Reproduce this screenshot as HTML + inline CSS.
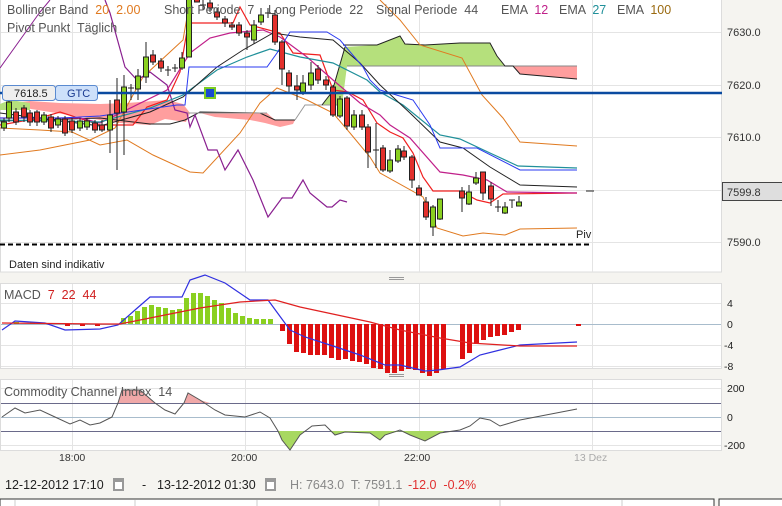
<!DOCTYPE html>
<html><head><meta charset="utf-8"><style>
html,body{margin:0;padding:0;width:782px;height:506px;overflow:hidden;background:#f5f4f0;font-family:"Liberation Sans",sans-serif}
svg{display:block}
svg text{white-space:pre}
</style></head><body>
<svg width="782" height="506" viewBox="0 0 782 506" xmlns="http://www.w3.org/2000/svg" font-family="Liberation Sans, sans-serif">
<rect x="0.5" y="-1" width="721" height="273" fill="#fff" stroke="#dcdcdc"/>
<rect x="0.5" y="283.5" width="721" height="85" fill="#fff" stroke="#dcdcdc"/>
<rect x="0.5" y="379.5" width="721" height="71" fill="#fff" stroke="#dcdcdc"/>
<g stroke="#e4e4e4" stroke-width="1">
<line x1="1" y1="32.5" x2="721" y2="32.5"/><line x1="1" y1="85.5" x2="721" y2="85.5"/><line x1="1" y1="137.5" x2="721" y2="137.5"/><line x1="1" y1="190.5" x2="721" y2="190.5"/><line x1="1" y1="242.5" x2="721" y2="242.5"/>
<line x1="72.5" y1="0" x2="72.5" y2="272"/><line x1="245.5" y1="0" x2="245.5" y2="272"/><line x1="419.5" y1="0" x2="419.5" y2="272"/><line x1="592.5" y1="0" x2="592.5" y2="272"/>
<line x1="72.5" y1="284" x2="72.5" y2="368"/><line x1="245.5" y1="284" x2="245.5" y2="368"/><line x1="419.5" y1="284" x2="419.5" y2="368"/><line x1="592.5" y1="284" x2="592.5" y2="368"/>
<line x1="72.5" y1="380" x2="72.5" y2="450"/><line x1="245.5" y1="380" x2="245.5" y2="450"/><line x1="419.5" y1="380" x2="419.5" y2="450"/><line x1="592.5" y1="380" x2="592.5" y2="450"/>
<line x1="1" y1="303.5" x2="721" y2="303.5"/><line x1="1" y1="345.5" x2="721" y2="345.5"/><line x1="1" y1="366.5" x2="721" y2="366.5"/><line x1="1" y1="388.5" x2="721" y2="388.5"/><line x1="1" y1="445.5" x2="721" y2="445.5"/>
</g>
<line x1="1" y1="324.5" x2="721" y2="324.5" stroke="#a8bccc"/>
<line x1="1" y1="417.5" x2="721" y2="417.5" stroke="#a8bccc"/>
<line x1="1" y1="403.5" x2="721" y2="403.5" stroke="#6a6a8a"/>
<line x1="1" y1="431.5" x2="721" y2="431.5" stroke="#6a6a8a"/>
<g stroke="#999"><line x1="389" y1="277.5" x2="404" y2="277.5"/><line x1="389" y1="279.5" x2="404" y2="279.5"/><line x1="389" y1="374.5" x2="404" y2="374.5"/><line x1="389" y1="376.5" x2="404" y2="376.5"/></g>

<polygon points="0,104 30,101 60,103 100,104 127,103 167,100 183,104 190,113 186,122 165,119 150,125 120,123 100,120" fill="#ff9e9e"/>
<polygon points="187,113 267,113 275,120 295,120 293,124 280,127 265,123 250,120 215,117 200,113" fill="#ff9e9e"/>
<polygon points="0,104 10,100 30,103 30,110 0,110" fill="#b5e07c"/>
<polygon points="322,105 332,92 345,47 377,45 400,36 405,44 425,45 460,43 490,43 497,56 505,66 347,66 342,105" fill="#b5e07c"/>
<polygon points="513,66 577,66 577,79 520,74" fill="#ff9e9e"/>
<polyline points="0,121 40,120 100,118 150,124 170,124 185,120 200,112 260,113 275,120 295,120" fill="none" stroke="#222" stroke-width="1"/>
<polyline points="187,113 267,113" fill="none" stroke="#999"/>
<polyline points="295,120 305,105 342,105" fill="none" stroke="#999"/>
<polyline points="347,66 513,66 577,66" fill="none" stroke="#888"/>
<polyline points="343,45 377,45 400,36 405,44 425,45 460,43 490,43 497,56 505,66 513,66 520,74 577,79" fill="none" stroke="#222"/>
<polyline points="322,105 332,92 345,47" fill="none" stroke="#222"/>

<polyline points="0,155 40,150 90,140 115,128 133,95 143,77 183,40 190,0" fill="none" stroke="#e07a20"/>
<polyline points="380,0 400,20 420,45 462,58 482,95 503,118 520,142 577,146" fill="none" stroke="#e07a20"/>
<polyline points="0,128 40,130 72,132 100,145 127,140 153,155 190,172 203,173 240,133 260,103 277,88 287,92 307,100 333,113 350,133 370,157 380,173 423,197 437,228 463,236 483,233 505,235 520,229 577,228" fill="none" stroke="#e07a20"/>
<polyline points="0,68 20,40 40,12 50,0" fill="none" stroke="#8a2090"/>
<polyline points="105,0 110,13 125,67 137,80 150,72 167,85 175,110 187,113 190,127 195,115 208,150 217,150 225,170 238,150 253,180 268,217 282,198 292,198 303,180 310,193 327,207 332,207 340,200 347,202" fill="none" stroke="#8a2090" stroke-width="1.2"/>
<polyline points="0,125 40,118 60,112 100,125 133,125 147,107 167,100 180,72 188,25 192,23 233,23 240,7 250,25 280,33 293,53 320,55 333,90 348,92 363,100 377,123 390,132 403,138 413,153 423,177 433,191 460,191 477,200 490,203 503,194 577,193" fill="none" stroke="#f02020" stroke-width="1.2"/>
<polyline points="0,118 80,118 100,123 167,90 190,53 210,38 230,33 263,30 280,37 307,57 333,80 360,103 380,115 390,125 410,138 440,172 463,175 487,180 507,192 577,193" fill="none" stroke="#c0208a" stroke-width="1.2"/>
<polyline points="0,120 100,122 150,108 183,95 217,70 247,57 270,49 300,57 333,63 367,80 380,92 403,105 440,135 460,139 490,153 518,166 577,168" fill="none" stroke="#20909a" stroke-width="1.2"/>
<polyline points="0,113 100,126 150,112 183,97 217,67 243,50 273,33 300,37 333,40 360,63 380,85 410,113 440,142 463,148 490,167 520,185 577,187" fill="none" stroke="#222" stroke-width="1"/>
<polyline points="0,118 60,118 100,116 177,105 185,105 189,67 267,67 277,53 290,32 327,32 340,40 363,67 370,80 380,90 413,100 430,125 440,148 477,148 520,170 577,170" fill="none" stroke="#2a3af0" stroke-width="1"/>

<g stroke="#222" stroke-width="1">
<line x1="4" y1="118" x2="4" y2="131"/><rect x="1.5" y="122" width="5" height="6" fill="#8ad020"/>
<line x1="9" y1="100" x2="9" y2="122"/><rect x="6.5" y="102" width="5" height="16" fill="#8ad020"/>
<line x1="16" y1="108" x2="16" y2="125"/><rect x="13.5" y="112" width="5" height="10" fill="#e3302c"/>
<line x1="24" y1="105" x2="24" y2="122"/><rect x="21.5" y="108" width="5" height="9" fill="#e3302c"/>
<line x1="30" y1="110" x2="30" y2="126"/><rect x="27.5" y="113" width="5" height="9" fill="#e3302c"/>
<line x1="37" y1="110" x2="37" y2="126"/><rect x="34.5" y="112" width="5" height="10" fill="#e3302c"/>
<line x1="44" y1="112" x2="44" y2="125"/><rect x="41.5" y="115" width="5" height="7" fill="#8ad020"/>
<line x1="51" y1="114" x2="51" y2="132"/><rect x="48.5" y="117" width="5" height="11" fill="#e3302c"/>
<line x1="58" y1="116" x2="58" y2="128"/><rect x="55.5" y="119" width="5" height="6" fill="#8ad020"/>
<line x1="65" y1="116" x2="65" y2="136"/><rect x="62.5" y="119" width="5" height="14" fill="#e3302c"/>
<line x1="72" y1="118" x2="72" y2="133"/><rect x="69.5" y="121" width="5" height="9" fill="#e3302c"/>
<line x1="80" y1="118" x2="80" y2="131"/><rect x="77.5" y="121" width="5" height="7" fill="#8ad020"/>
<line x1="87" y1="118" x2="87" y2="130"/><rect x="84.5" y="121" width="5" height="6" fill="#8ad020"/>
<line x1="95" y1="120" x2="95" y2="133"/><rect x="92.5" y="123" width="5" height="7" fill="#e3302c"/>
<line x1="102" y1="120" x2="102" y2="132"/><rect x="99.5" y="125" width="5" height="5" fill="#e3302c"/>
<line x1="110" y1="100" x2="110" y2="153"/><rect x="107.5" y="115" width="5" height="15" fill="#8ad020"/>
<line x1="117" y1="78" x2="117" y2="170"/><rect x="114.5" y="100" width="5" height="13" fill="#e3302c"/>
<line x1="124" y1="75" x2="124" y2="155"/><rect x="121.5" y="87" width="5" height="25" fill="#8ad020"/>
<line x1="128" y1="88" x2="134" y2="88"/><line x1="131" y1="84" x2="131" y2="100"/>
<line x1="138" y1="69" x2="138" y2="100"/><rect x="135.5" y="76" width="5" height="13" fill="#8ad020"/>
<line x1="146" y1="42" x2="146" y2="83"/><rect x="143.5" y="57" width="5" height="20" fill="#8ad020"/>
<line x1="153" y1="50" x2="153" y2="65"/><rect x="150.5" y="55" width="5" height="7" fill="#e3302c"/>
<line x1="161" y1="58" x2="161" y2="72"/><rect x="158.5" y="61" width="5" height="7" fill="#e3302c"/>
<line x1="165" y1="70" x2="171" y2="70"/><line x1="168" y1="66" x2="168" y2="76"/>
<line x1="172" y1="68" x2="178" y2="68"/><line x1="175" y1="64" x2="175" y2="72"/>
<line x1="182" y1="52" x2="182" y2="70"/><rect x="179.5" y="58" width="5" height="10" fill="#8ad020"/>
<rect x="186.5" y="-2" width="5" height="59" fill="#8ad020"/>
<rect x="194.5" y="-2" width="5" height="4" fill="#e3302c"/>
<line x1="200" y1="5" x2="206" y2="5"/><line x1="203" y1="0" x2="203" y2="10"/>
<line x1="210" y1="0" x2="210" y2="12"/><rect x="207.5" y="3" width="5" height="5" fill="#e3302c"/>
<line x1="217" y1="8" x2="217" y2="20"/><rect x="214.5" y="12" width="5" height="5" fill="#e3302c"/>
<line x1="225" y1="16" x2="225" y2="27"/><rect x="222.5" y="19" width="5" height="4" fill="#e3302c"/>
<line x1="232" y1="22" x2="232" y2="30"/><rect x="229.5" y="25" width="5" height="2" fill="#e3302c"/>
<line x1="239" y1="22" x2="239" y2="36"/><rect x="236.5" y="25" width="5" height="8" fill="#e3302c"/>
<line x1="247" y1="30" x2="247" y2="50"/><rect x="244.5" y="33" width="5" height="4" fill="#e3302c"/>
<line x1="254" y1="20" x2="254" y2="44"/><rect x="251.5" y="25" width="5" height="15" fill="#8ad020"/>
<line x1="261" y1="8" x2="261" y2="25"/><rect x="258.5" y="15" width="5" height="7" fill="#8ad020"/>
<line x1="265" y1="13" x2="271" y2="13"/><line x1="268" y1="8" x2="268" y2="18"/>
<line x1="275" y1="10" x2="275" y2="45"/><rect x="272.5" y="15" width="5" height="27" fill="#e3302c"/>
<line x1="282" y1="40" x2="282" y2="85"/><rect x="279.5" y="42" width="5" height="27" fill="#e3302c"/>
<line x1="289" y1="70" x2="289" y2="92"/><rect x="286.5" y="73" width="5" height="13" fill="#e3302c"/>
<line x1="297" y1="75" x2="297" y2="100"/><rect x="294.5" y="86" width="5" height="4" fill="#e3302c"/>
<line x1="303" y1="75" x2="303" y2="95"/><rect x="300.5" y="83" width="5" height="9" fill="#8ad020"/>
<line x1="311" y1="62" x2="311" y2="90"/><rect x="308.5" y="73" width="5" height="12" fill="#8ad020"/>
<line x1="318" y1="65" x2="318" y2="84"/><rect x="315.5" y="69" width="5" height="11" fill="#e3302c"/>
<line x1="326" y1="76" x2="326" y2="90"/><rect x="323.5" y="80" width="5" height="5" fill="#e3302c"/>
<line x1="333" y1="85" x2="333" y2="117"/><rect x="330.5" y="87" width="5" height="28" fill="#e3302c"/>
<line x1="340" y1="96" x2="340" y2="118"/><rect x="337.5" y="99" width="5" height="17" fill="#8ad020"/>
<line x1="347" y1="96" x2="347" y2="130"/><rect x="344.5" y="98" width="5" height="28" fill="#e3302c"/>
<line x1="354" y1="110" x2="354" y2="130"/><rect x="351.5" y="115" width="5" height="12" fill="#8ad020"/>
<line x1="362" y1="110" x2="362" y2="130"/><rect x="359.5" y="115" width="5" height="12" fill="#e3302c"/>
<line x1="368" y1="124" x2="368" y2="168"/><rect x="365.5" y="127" width="5" height="25" fill="#e3302c"/>
<line x1="373" y1="150" x2="379" y2="150"/><line x1="376" y1="123" x2="376" y2="168"/>
<line x1="383" y1="145" x2="383" y2="172"/><rect x="380.5" y="148" width="5" height="22" fill="#e3302c"/>
<line x1="390" y1="150" x2="390" y2="173"/><rect x="387.5" y="160" width="5" height="11" fill="#8ad020"/>
<line x1="398" y1="145" x2="398" y2="163"/><rect x="395.5" y="149" width="5" height="12" fill="#8ad020"/>
<line x1="404" y1="146" x2="404" y2="160"/><rect x="401.5" y="151" width="5" height="6" fill="#e3302c"/>
<line x1="412" y1="155" x2="412" y2="188"/><rect x="409.5" y="157" width="5" height="23" fill="#e3302c"/>
<line x1="419" y1="185" x2="419" y2="195"/><rect x="416.5" y="188" width="5" height="7" fill="#e3302c"/>
<line x1="426" y1="197" x2="426" y2="220"/><rect x="423.5" y="202" width="5" height="15" fill="#e3302c"/>
<line x1="433" y1="205" x2="433" y2="236"/><rect x="430.5" y="207" width="5" height="20" fill="#8ad020"/>
<line x1="440" y1="199" x2="440" y2="220"/><rect x="437.5" y="199" width="5" height="20" fill="#8ad020"/>
<line x1="462" y1="187" x2="462" y2="212"/><rect x="459.5" y="191" width="5" height="7" fill="#e3302c"/>
<line x1="469" y1="185" x2="469" y2="205"/><rect x="466.5" y="192" width="5" height="12" fill="#8ad020"/>
<line x1="476" y1="172" x2="476" y2="185"/><rect x="473.5" y="178" width="5" height="5" fill="#8ad020"/>
<line x1="483" y1="172" x2="483" y2="200"/><rect x="480.5" y="172" width="5" height="21" fill="#e3302c"/>
<line x1="491" y1="182" x2="491" y2="206"/><rect x="488.5" y="186" width="5" height="13" fill="#e3302c"/>
<line x1="495" y1="207" x2="501" y2="207"/><line x1="498" y1="200" x2="498" y2="212"/>
<line x1="505" y1="202" x2="505" y2="214"/><rect x="502.5" y="207" width="5" height="6" fill="#8ad020"/>
<line x1="509" y1="200" x2="515" y2="200"/><line x1="512" y1="200" x2="512" y2="208"/>
<line x1="519" y1="196" x2="519" y2="206"/><rect x="516.5" y="202" width="5" height="4" fill="#8ad020"/>
</g>

<line x1="0" y1="244.5" x2="590" y2="244.5" stroke="#000" stroke-width="2" stroke-dasharray="5,3"/>
<text x="576" y="238" font-size="11" fill="#222">Piv</text>
<line x1="0" y1="93" x2="722" y2="93" stroke="#0a4aa0" stroke-width="2.5"/>
<rect x="2.5" y="85.5" width="53" height="15" rx="3" fill="#eeeeee" stroke="#5a8ad0"/>
<rect x="55.5" y="85.5" width="42" height="15" rx="3" fill="#cde0fa" stroke="#5a8ad0"/>
<text x="14" y="97" font-size="11" fill="#222">7618.5</text>
<text x="67" y="97" font-size="11" fill="#1a3a90">GTC</text>
<rect x="205" y="88" width="10" height="10" fill="#1a4ad0" stroke="#7acc20" stroke-width="2"/>

<g font-size="12.5" fill="#555">
<text x="7" y="14">Bollinger Band  <tspan fill="#e07a20">20  2.00</tspan></text>
<text x="164" y="14">Short Periode  7</text>
<text x="268" y="14">Long Periode  22</text>
<text x="376" y="14">Signal Periode  44</text>
<text x="501" y="14">EMA  <tspan fill="#c0208a">12</tspan></text>
<text x="559" y="14">EMA  <tspan fill="#20909a">27</tspan></text>
<text x="617" y="14">EMA  <tspan fill="#9a6a10">100</tspan></text>
<text x="7" y="32">Pivot Punkt  Täglich</text>
</g>
<text x="9" y="268" font-size="11" fill="#222">Daten sind indikativ</text>
<g font-size="11" fill="#333">
<text x="727" y="36">7630.0</text><text x="727" y="89">7620.0</text><text x="727" y="141">7610.0</text><text x="727" y="246">7590.0</text>
</g>
<rect x="722.5" y="182.5" width="60" height="18" fill="#dedede" stroke="#444"/>
<text x="727" y="196" font-size="11" fill="#333">7599.8</text>
<line x1="586" y1="191" x2="594" y2="191" stroke="#222"/>

<text x="4" y="299" font-size="12.5" fill="#555">MACD  <tspan fill="#d02020">7  22  44</tspan></text>
<g fill="#8ad020">
<rect x="121" y="318" width="5" height="6"/><rect x="128" y="316" width="5" height="8"/><rect x="135" y="311" width="5" height="13"/><rect x="142" y="307" width="5" height="17"/><rect x="149" y="305" width="5" height="19"/><rect x="156" y="307" width="5" height="17"/><rect x="163" y="308" width="5" height="16"/><rect x="170" y="310" width="5" height="14"/><rect x="177" y="309" width="5" height="15"/><rect x="184" y="298" width="5" height="26"/><rect x="191" y="293" width="5" height="31"/><rect x="198" y="293" width="5" height="31"/><rect x="205" y="296" width="5" height="28"/><rect x="212" y="300" width="5" height="24"/><rect x="219" y="303" width="5" height="21"/><rect x="226" y="308" width="5" height="16"/><rect x="233" y="313" width="5" height="11"/><rect x="240" y="316" width="5" height="8"/><rect x="247" y="318" width="5" height="6"/><rect x="254" y="319" width="5" height="5"/><rect x="261" y="319" width="5" height="5"/><rect x="268" y="319" width="5" height="5"/>
<rect x="14" y="322" width="5" height="2"/><rect x="30" y="322" width="5" height="2"/>
</g>
<g fill="#dd1010">
<rect x="280" y="324" width="5" height="7"/><rect x="287" y="324" width="5" height="20"/><rect x="294" y="324" width="5" height="28"/><rect x="301" y="324" width="5" height="29"/><rect x="308" y="324" width="5" height="31"/><rect x="315" y="324" width="5" height="31"/><rect x="322" y="324" width="5" height="31"/><rect x="329" y="324" width="5" height="34"/><rect x="336" y="324" width="5" height="36"/><rect x="343" y="324" width="5" height="35"/><rect x="350" y="324" width="5" height="37"/><rect x="357" y="324" width="5" height="38"/><rect x="364" y="324" width="5" height="40"/><rect x="371" y="324" width="5" height="44"/><rect x="378" y="324" width="5" height="45"/><rect x="385" y="324" width="5" height="49"/><rect x="392" y="324" width="5" height="49"/><rect x="399" y="324" width="5" height="47"/><rect x="406" y="324" width="5" height="45"/><rect x="413" y="324" width="5" height="46"/><rect x="420" y="324" width="5" height="49"/><rect x="427" y="324" width="5" height="52"/><rect x="434" y="324" width="5" height="49"/><rect x="441" y="324" width="5" height="45"/>
<rect x="460" y="324" width="5" height="35"/><rect x="467" y="324" width="5" height="29"/><rect x="474" y="324" width="5" height="20"/><rect x="481" y="324" width="5" height="16"/><rect x="488" y="324" width="5" height="13"/><rect x="495" y="324" width="5" height="12"/><rect x="502" y="324" width="5" height="11"/><rect x="509" y="324" width="5" height="8"/><rect x="516" y="324" width="5" height="6"/><rect x="576" y="324" width="5" height="2"/>
<rect x="65" y="324" width="5" height="2"/><rect x="80" y="324" width="5" height="2"/><rect x="95" y="324" width="5" height="2"/>
</g>
<polyline points="2,330 15,321 45,323 65,330 100,329 118,325 135,310 150,297 182,297 190,280 205,275 225,283 250,300 268,300 290,330 305,337 330,345 360,355 385,365 400,365 425,371 438,370 460,367 480,355 500,350 520,345 577,342" fill="none" stroke="#3030e0" stroke-width="1.2"/>
<polyline points="2,323 100,324 120,324 150,318 200,308 240,302 275,300 300,307 370,322 400,330 440,338 470,343 520,346 577,346" fill="none" stroke="#e02020" stroke-width="1.2"/>
<g font-size="10.5" fill="#222"><text x="727" y="307">4</text><text x="727" y="328">0</text><text x="724" y="349">-4</text><text x="724" y="370">-8</text></g>

<polygon points="118,403 122,390 140,390 155,403" fill="#f0a8a8"/>
<polygon points="184,403 188,393 200,400 210,403" fill="#f0a8a8"/>
<polygon points="278,431 282,440 290,450 300,435 304,431" fill="#a8d860"/>
<polygon points="330,431 335,435 345,432 370,433 380,440 385,435 400,431 410,435 425,441 440,433 445,431" fill="#a8d860"/>
<text x="4" y="396" font-size="12.5" fill="#555">Commodity Channel Index  14</text>
<polyline points="2,417 15,408 25,413 40,410 55,417 70,424 80,420 90,425 100,423 112,417 118,403 122,390 140,390 155,403 165,410 175,414 184,403 188,393 200,400 215,410 225,415 245,417 260,412 270,418 278,431 282,440 290,450 300,435 312,426 325,425 335,435 345,432 370,433 380,440 385,435 400,430 410,435 425,441 440,433 460,430 470,426 480,418 490,420 500,426 510,423 520,420 577,409" fill="none" stroke="#555" stroke-width="1"/>
<g font-size="10.5" fill="#222"><text x="727" y="392">200</text><text x="727" y="421">0</text><text x="724" y="449">-200</text></g>

<g font-size="10.5" fill="#333"><text x="59" y="461">18:00</text><text x="231" y="461">20:00</text><text x="404" y="461">22:00</text><text x="574" y="461" fill="#aaa">13 Dez</text></g>

<g font-size="12.5">
<text x="5" y="489" fill="#222">12-12-2012 17:10</text>
<rect x="113" y="478" width="11" height="13" fill="#999"/><rect x="115" y="482" width="7" height="7" fill="#fff"/>
<text x="142" y="489" fill="#222">-</text>
<text x="157" y="489" fill="#222">13-12-2012 01:30</text>
<rect x="265" y="478" width="11" height="13" fill="#999"/><rect x="267" y="482" width="7" height="7" fill="#fff"/>
<text x="290" y="489" fill="#888">H: 7643.0  T: 7591.1</text>
<text x="408" y="489" fill="#e03030">-12.0  -0.2%</text>
</g>
<rect x="0" y="499" width="714" height="8" fill="#fff" stroke="#333"/>
<g stroke="#ccc"><line x1="15" y1="500" x2="15" y2="506"/><line x1="135" y1="500" x2="135" y2="506"/><line x1="257" y1="500" x2="257" y2="506"/><line x1="379" y1="500" x2="379" y2="506"/><line x1="500" y1="500" x2="500" y2="506"/><line x1="622" y1="500" x2="622" y2="506"/></g>
<rect x="719" y="499" width="64" height="8" fill="#fff" stroke="#333"/>
</svg>
</body></html>
